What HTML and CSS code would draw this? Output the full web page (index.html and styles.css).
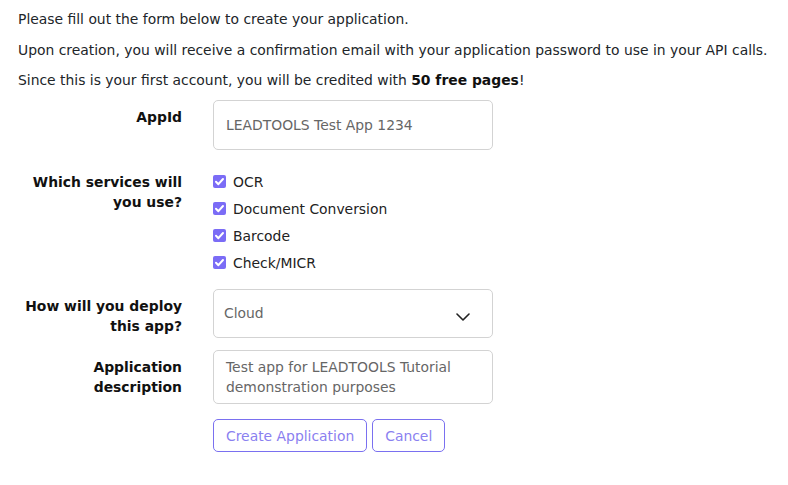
FILE: index.html
```html
<!DOCTYPE html>
<html>
<head>
<meta charset="utf-8">
<link rel="stylesheet" href="styles.css">
</head>
<body>
<div class="page">
  <p class="intro">Please fill out the form below to create your application.</p>
  <p class="intro">Upon creation, you will receive a confirmation email with your application password to use in your API calls.</p>
  <p class="intro intro-last">Since this is your first account, you will be credited with <b>50 free pages</b>!</p>

  <form class="form">
    <div class="row row-appid">
      <label class="label">AppId</label>
      <div class="control">
        <div class="input">LEADTOOLS Test App 1234</div>
      </div>
    </div>

    <div class="row row-services">
      <label class="label">Which services will you use?</label>
      <div class="control">
        <ul class="checks">
          <li class="check"><span class="box"><svg viewBox="0 0 13 13" width="13" height="13"><path d="M3 6.8 L5.4 9.2 L10 4" fill="none" stroke="#fff" stroke-width="2" stroke-linecap="round" stroke-linejoin="round"/></svg></span>OCR</li>
          <li class="check"><span class="box"><svg viewBox="0 0 13 13" width="13" height="13"><path d="M3 6.8 L5.4 9.2 L10 4" fill="none" stroke="#fff" stroke-width="2" stroke-linecap="round" stroke-linejoin="round"/></svg></span>Document Conversion</li>
          <li class="check"><span class="box"><svg viewBox="0 0 13 13" width="13" height="13"><path d="M3 6.8 L5.4 9.2 L10 4" fill="none" stroke="#fff" stroke-width="2" stroke-linecap="round" stroke-linejoin="round"/></svg></span>Barcode</li>
          <li class="check"><span class="box"><svg viewBox="0 0 13 13" width="13" height="13"><path d="M3 6.8 L5.4 9.2 L10 4" fill="none" stroke="#fff" stroke-width="2" stroke-linecap="round" stroke-linejoin="round"/></svg></span>Check/MICR</li>
        </ul>
      </div>
    </div>

    <div class="row row-deploy">
      <label class="label">How will you deploy this app?</label>
      <div class="control">
        <div class="select"><span>Cloud</span>
          <svg class="chev" viewBox="0 0 14 8" width="14" height="8"><path d="M1 1 L7 7 L13 1" fill="none" stroke="#222" stroke-width="1.6" stroke-linecap="round" stroke-linejoin="round"/></svg>
        </div>
      </div>
    </div>

    <div class="row row-desc">
      <label class="label">Application description</label>
      <div class="control">
        <div class="textarea">Test app for LEADTOOLS Tutorial demonstration purposes</div>
      </div>
    </div>

    <div class="row row-buttons">
      <div class="label"></div>
      <div class="control buttons">
        <button type="button" class="btn">Create Application</button>
        <button type="button" class="btn">Cancel</button>
      </div>
    </div>
  </form>
</div>
</body>
</html>
```

FILE: styles.css
```css
html, body {
  margin: 0;
  padding: 0;
  background: #fff;
}
body {
  font-family: "DejaVu Sans", "Open Sans", sans-serif;
  font-size: 13.9px;
  color: #212529;
}
.page {
  padding: 9px 18px 0 18px;
}
.intro {
  margin: 0 0 10.5px 0;
  line-height: 20px;
}
.intro-last {
  margin-bottom: 10px;
}
.intro b {
  font-weight: bold;
  color: #111;
}
.row {
  display: flex;
  gap: 31px;
  align-items: flex-start;
}
.label {
  width: 164px;
  flex: 0 0 164px;
  text-align: right;
  font-weight: bold;
  color: #111;
  padding-top: 7px;
  line-height: 20px;
}
.control {
  width: 280px;
}
.row-appid { margin-bottom: 15px; }
.row-services { margin-bottom: 13px; }
.row-deploy { margin-bottom: 12px; }
.row-desc { margin-bottom: 15px; }

.input, .select, .textarea {
  box-sizing: border-box;
  width: 280px;
  border: 1px solid #d3d3d3;
  border-radius: 5px;
  color: #666;
  background: #fff;
}
.input {
  height: 50px;
  padding: 0 12px;
  display: flex;
  align-items: center;
}
.checks {
  list-style: none;
  margin: 0;
  padding: 3px 0 0 0;
}
.check {
  height: 27px;
  display: flex;
  align-items: center;
  color: #222;
}
.box {
  width: 13px;
  height: 13px;
  border-radius: 2px;
  background: #7b6cf6;
  display: inline-flex;
  margin-right: 7px;
}
.select {
  height: 49px;
  padding: 0 22px 0 10px;
  display: flex;
  align-items: center;
  justify-content: space-between;
}
.select span { position: relative; top: -1px; }
.chev { position: relative; top: 3px; }
.textarea {
  height: 54px;
  padding: 6px 12px;
  line-height: 20px;
}
.buttons {
  display: flex;
  gap: 5px;
}
.btn {
  font-family: inherit;
  font-size: 13.9px;
  height: 33px;
  padding: 0 12px;
  background: #fff;
  border: 1px solid #7a70f0;
  border-radius: 5px;
  color: #8a80f0;
}
```
